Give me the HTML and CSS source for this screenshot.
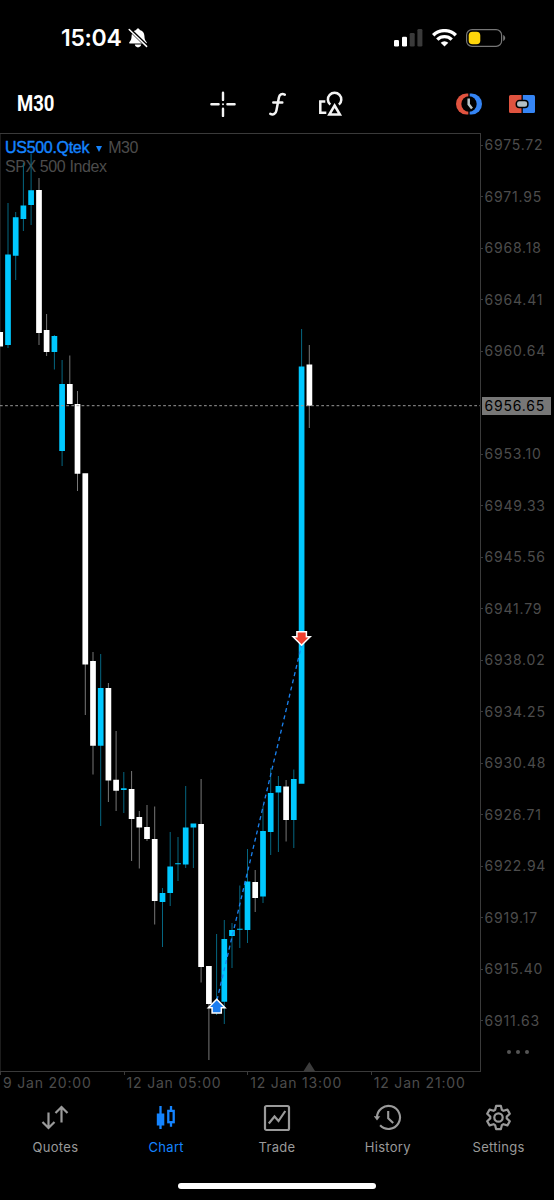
FILE: index.html
```
<!DOCTYPE html>
<html lang="en">
<head>
<meta charset="utf-8">
<title>US500.Qtek M30</title>
<link rel="stylesheet" href="styles.css">
</head>
<body>
<div class="screen">
  <header class="status">
    <div class="status-left">
      <span class="clock">15:04</span>
      <svg class="bell" width="20" height="20" viewBox="0 0 20 20">
        <path d="M10 .6c.9 0 1.600.6 1.700 1.400 2.900.7 4.600 3 4.700 5.800.1 3.400.6 4.500 2.100 6.100.6.7.3 1.600-.6 1.600H2.100c-.9 0-1.200-.9-.6-1.600C3 12.300 3.500 11.200 3.600 7.800 3.700 5 5.400 2.700 8.300 2 8.400 1.200 9.100.6 10 .6zM6.800 16.600h6.400c-.3 1.700-1.600 2.800-3.200 2.800s-2.900-1.100-3.200-2.800z" fill="#fff"/>
        <path d="M1.200 .9 19 18.200" stroke="#000" stroke-width="3.400"/>
        <path d="M1.200 1.500 18.600 18.400" stroke="#fff" stroke-width="1.500" stroke-linecap="round"/>
      </svg>
    </div>
    <div class="status-right">
      <svg width="29" height="18" viewBox="0 0 29 18">
        <rect x="0" y="11" width="5" height="6.500" rx="1.300" fill="#fff"/>
        <rect x="8" y="7.700" width="5" height="9.800" rx="1.300" fill="#fff"/>
        <rect x="15.700" y="4" width="5" height="13.500" rx="1.300" fill="#3a3a3a"/>
        <rect x="23.400" y="0" width="5" height="17.500" rx="1.300" fill="#3a3a3a"/>
      </svg>
      <svg width="25" height="18" viewBox="0 0 25 18">
        <g fill="none" stroke="#fff" stroke-width="3.400">
          <path d="M1.200 6.300a16 16 0 0 1 22.600 0"/>
          <path d="M5.300 10.600a10.200 10.200 0 0 1 14.400 0"/>
        </g>
        <path d="M12.500 17.600 8.700 13.800a5.400 5.400 0 0 1 7.600 0z" fill="#fff"/>
      </svg>
      <svg width="40" height="18" viewBox="0 0 40 18">
        <rect x=".6" y=".6" width="35" height="16.800" rx="5.500" fill="none" stroke="#767676" stroke-width="1.200"/>
        <rect x="2.700" y="2.700" width="11.600" height="12.600" rx="3.800" fill="#ffd60a"/>
        <path d="M37.200 6v6c1.200-.5 2-1.600 2-3s-.8-2.500-2-3z" fill="#767676"/>
      </svg>
    </div>
  </header>

  <nav class="toolbar">
    <span class="period">M30</span>
    <div class="tools">
      <svg width="26" height="26" viewBox="0 0 26 26" stroke="#f4f4f4" stroke-width="2.400" stroke-linecap="round">
        <path d="M1.400 13.300H8.600M17.400 13.300h7.200M13 1.700V8.900M13 17.700v7.200"/><path d="M13 13.300h.01" stroke-width="2"/>
      </svg>
      <svg width="26" height="26" viewBox="0 0 26 26" fill="none" stroke="#f4f4f4" stroke-width="2.500" stroke-linecap="round">
        <path d="M20.800 3.600C17.800 2.200 15.500 3.600 14.900 6.600L12.400 19.400C11.800 22.800 9.300 24.300 6.300 22.900M9.300 11.400H18.300"/>
      </svg>
      <svg width="26" height="26" viewBox="0 0 26 26" fill="none" stroke="#f4f4f4" stroke-width="2.500">
        <path d="M7.300 10.600H2.300V21.700H8.300"/>
        <path d="M12.300 13.600a6.700 6.700 0 1 1 8.600 0"/>
        <path d="M16.600 14.500 21.900 23.600H11.300z"/>
      </svg>
    </div>
    <div class="trade-tools">
      <svg width="26" height="22" viewBox="0 0 26 22">
        <path d="M12.300 .5v21h-1.800A10.500 10.500 0 0 1 10.500.5z" fill="#e0533f"/>
        <path d="M13.700 .5v21h1.800a10.500 10.500 0 0 0 0-21z" fill="#3585f5"/>
        <circle cx="13" cy="11" r="7.700" fill="#000"/>
        <path d="M12.700 5.500v5.800l3.300 4.200" fill="none" stroke="#b8c4c8" stroke-width="2.500"/>
      </svg>
      <svg width="26" height="18" viewBox="0 0 26 18">
        <path d="M1.500 0h11v18h-11A1.500 1.500 0 0 1 0 16.500v-15A1.500 1.500 0 0 1 1.500 0z" fill="#e0533f"/>
        <path d="M13.800 0h10.700A1.500 1.500 0 0 1 26 1.500v15a1.500 1.500 0 0 1-1.500 1.500H13.800z" fill="#3585f5"/>
        <rect x="7.300" y="5.600" width="11.600" height="7" rx="3" fill="#b4bfc4" stroke="#000" stroke-width="1.500"/>
      </svg>
    </div>
  </nav>

  <main class="chart">
    <div class="plot">
      <div class="legend">
        <div><span class="symbol">US500.Qtek</span><span class="caret"></span><span>M30</span></div>
        <div>SPX 500 Index</div>
      </div>
      <svg class="candles" width="480" height="938" viewBox="0 134 480 938" fill="none">
        <path class="wick down" d="M39 178V345M46.600 314V356M69.800 355.500V404M77.500 391V491M85.300 474V715M93 652V774.500M108.400 683V802M116.100 731V811M131.600 771V861M139.300 811V868.500M147 805V841M154.700 806.500V924.500M201.100 779V982.500M208.900 966V1060M255.200 870V912M286.100 780V841.500M309.300 345V428"/>
        <path class="wick up" d="M8 203V348M15.700 212V280M23.400 163V231M31.100 154V225M54.400 335V369.500M62.100 360V466M100.700 654V826M123.800 772V813M162.500 888V947M170.200 832V906M178 837V881M185.700 786V868M193.400 824V868M216.600 934V1015M224.300 920V1024M232 923V968M239.800 885.500V948M247.500 849V943M263 806V903M270.700 768V855M278.400 776V852M293.800 769.500V848M301.600 329V370"/>
        <path class="body down" d="M.2 332V346.500M39 190V333M46.600 330V352M69.800 384V404M77.500 404V473.700M85.300 473.300V664.500M93 661V745.700M108.400 688V780.500M116.100 779.700V790.700M131.600 789V819M139.300 817V827.600M147 827V839M154.700 839V901M201.100 824V967M208.900 966V1004M255.200 882V898M286.100 786.500V820M309.400 364.500V405.700"/>
        <path class="body up" d="M8 254.500V345M15.700 217.300V255.700M23.400 205.500V219M31.100 190.300V205M54.400 336V352M62.100 384V451M100.700 688V745.700M123.800 788.200V790M162.500 893V902M170.200 866.500V893M178 863.200V864.300M185.700 827.500V864.500M193.400 823.600V827.500M224.300 939V1001.700M232 930V936M239.800 928.800V929.800M247.500 881.500V930M263 831V896.500M270.700 793V832M278.400 786V792.500M293.800 779V820M301.600 366.500V783.700"/>
        <path d="M0 405.700H480" stroke="#999" stroke-dasharray="2.700 2.400"/>
        <path d="M217 1000 301.600 645" stroke="#1a82f0" stroke-width="1.300" stroke-dasharray="4 3.400"/>
        <path d="M216.700 999.300 225 1007.700H221.300V1013H212.100V1007.700H208.400z" fill="#1a7df0" stroke="#fff" stroke-width="1.500"/>
        <path d="M301.600 645.200 310.200 636.700H306.400V631.700H296.900V636.700H293.100z" fill="#f0402f" stroke="#fff" stroke-width="1.500"/>
        <path d="M303 1072 309.300 1062 315.600 1072z" fill="#3c3c3c"/>
      </svg>
    </div>
    <aside class="prices">
      <span>6975.72</span><span>6971.95</span><span>6968.18</span><span>6964.41</span><span>6960.64</span>
      <span class="current">6956.65</span>
      <span>6953.10</span><span>6949.33</span><span>6945.56</span><span>6941.79</span><span>6938.02</span><span>6934.25</span><span>6930.48</span><span>6926.71</span><span>6922.94</span><span>6919.17</span><span>6915.40</span><span>6911.63</span>
      <div class="more"><i></i><i></i><i></i></div>
    </aside>
  </main>
  <div class="times"><span>9 Jan 20:00</span><span>12 Jan 05:00</span><span>12 Jan 13:00</span><span>12 Jan 21:00</span></div>

  <nav class="tabs">
    <div class="tab">
      <svg width="28" height="28" viewBox="0 0 28 28" fill="none" stroke="currentColor" stroke-width="2.200"><path d="M7.500 8.500V24M1.500 18l6 6 6-6M20.500 18.500V3M14.500 9l6-6 6 6"/></svg>
      <span>Quotes</span>
    </div>
    <div class="tab active">
      <svg width="28" height="28" viewBox="0 0 28 28" fill="none" stroke="currentColor" stroke-width="2.300"><path d="M8.500 2V25M19 2V7M19 18v4.700"/><rect x="4.800" y="9.500" width="7.500" height="12" fill="currentColor" stroke="none"/><rect x="16.300" y="6.900" width="5.400" height="11.300"/></svg>
      <span>Chart</span>
    </div>
    <div class="tab">
      <svg width="28" height="28" viewBox="0 0 28 28" fill="none" stroke="currentColor" stroke-width="2.200"><rect x="2" y="2" width="24" height="24" rx="1.500"/><path d="M5.800 19.500 11.500 12.500 15.500 17 22.300 7"/></svg>
      <span>Trade</span>
    </div>
    <div class="tab">
      <svg width="28" height="28" viewBox="0 0 28 28" fill="none" stroke="currentColor" stroke-width="2.100"><path d="M3 13.500A11.500 11.500 0 1 1 6.100 21.300"/><path d="M-.3 12.200H6.300L3 16.400z" fill="currentColor" stroke="none"/><path d="M14.200 7V14.300L19.200 19"/></svg>
      <span>History</span>
    </div>
    <div class="tab">
      <svg width="28" height="28" viewBox="-13.500 -13.500 28 28" fill="none" stroke="currentColor" stroke-width="2.200" stroke-linejoin="round"><path d="M-3.400-7.600-2.400-11.600H2.400L3.400-7.600 4.900-6.700 8.900-7.900 11.300-3.700 8.250-.9V.9L11.300 3.700 8.900 7.900 4.900 6.700 3.400 7.600 2.400 11.600H-2.400L-3.400 7.600-4.900 6.700-8.900 7.900-11.300 3.700-8.250.9V-.9L-11.300-3.700-8.900-7.900-4.900-6.700z"/><circle r="4.200"/></svg>
      <span>Settings</span>
    </div>
  </nav>
  <div class="home"></div>
</div>
</body>
</html>
```
FILE: styles.css
```
* { box-sizing: border-box; }
body { margin: 0; background: #000; }
svg { display: block; flex: none; }
.screen {
  width: 554px;
  height: 1200px;
  display: flex;
  flex-direction: column;
  background: #000;
  overflow: hidden;
  font-family: Inter, "Liberation Sans", sans-serif;
}
.status {
  height: 75px;
  display: flex;
  justify-content: space-between;
  align-items: center;
  padding: 0 48px 0 61px;
}
.status-left { display: flex; align-items: center; gap: 6px; }
.clock { color: #fff; font-size: 23px; font-weight: 600; line-height: 28px; letter-spacing: -.3px; }
.status-right { display: flex; align-items: center; gap: 9px; }

.toolbar {
  height: 58px;
  display: flex;
  align-items: center;
  padding: 0 19px 0 17px;
}
.period {
  width: 193px;
  color: #fff;
  font: 700 22px/26px Roboto, sans-serif;
  transform: scaleX(.84);
  transform-origin: left;
}
.tools { display: flex; align-items: center; gap: 28px; flex: 1; }
.trade-tools { display: flex; align-items: center; gap: 27px; }

.chart { height: 939px; display: flex; }
.plot {
  position: relative;
  width: 481px;
  border: solid #3a3a3a;
  border-width: 1px 1px 1px 0;
  box-shadow: inset 1px 0 #1c1c1c;
}
.legend {
  position: absolute;
  top: 4px;
  left: 5px;
  color: #4c4c4c;
  font: 16px/19px "Liberation Sans", sans-serif;
  letter-spacing: -.4px;
}
.legend div { display: flex; align-items: center; }
.symbol { color: #1484ff; letter-spacing: -.3px; -webkit-text-stroke: .4px #1484ff; }
.caret {
  margin: 2px 6px 0 7px;
  border: 3px solid transparent;
  border-top: 6px solid #1484ff;
  border-bottom: 0;
}
.candles { position: relative; }
.down { stroke: #fff; }
.up { stroke: #00c8ff; }
.body { stroke-width: 5.700px; }
.wick { stroke-width: 1px; }
.wick.down { stroke: #777; }
.wick.up { stroke: #056680; }

.prices {
  width: 73px;
  display: flex;
  flex-direction: column;
  padding-top: 3px;
  color: #4c4c4c;
  font-size: 14px;
  letter-spacing: .8px;
}
.prices span {
  height: 18px;
  margin-bottom: 33.530px;
  line-height: 18px;
  display: flex;
  align-items: center;
  flex: none;
}
.prices span::before { content: ""; width: 2px; height: 1px; margin-right: 1.500px; background: #3a3a3a; }
.prices .current {
  width: 69px;
  margin: 3px 0 30.530px 1px;
  padding-left: 2.500px;
  background: #777;
  color: #000;
}
.prices .current::before { content: none; }
.more { display: flex; gap: 4.500px; margin: -13.500px 0 0 25.500px; }
.more i { width: 4.500px; height: 4.500px; border-radius: 50%; background: #555; }

.times { height: 22px; display: flex; color: #4c4c4c; font-size: 14px; letter-spacing: .8px; }
.times span { width: 123.600px; padding-left: 3px; line-height: 22px; white-space: nowrap; background: linear-gradient(#3a3a3a, #3a3a3a) 0 0 / 1px 3px no-repeat; }

.tabs { height: 78px; display: grid; grid-template-columns: repeat(5, 1fr); padding-top: 10px; }
.tab { display: flex; flex-direction: column; align-items: center; gap: 6px; color: #9a9a9a; font-size: 13px; letter-spacing: .3px; }
.tab span { line-height: 18px; }
.tab.active { color: #1484ff; }
.home { width: 198px; height: 6px; margin: 11px auto 0; border-radius: 3px; background: #fff; }
```
